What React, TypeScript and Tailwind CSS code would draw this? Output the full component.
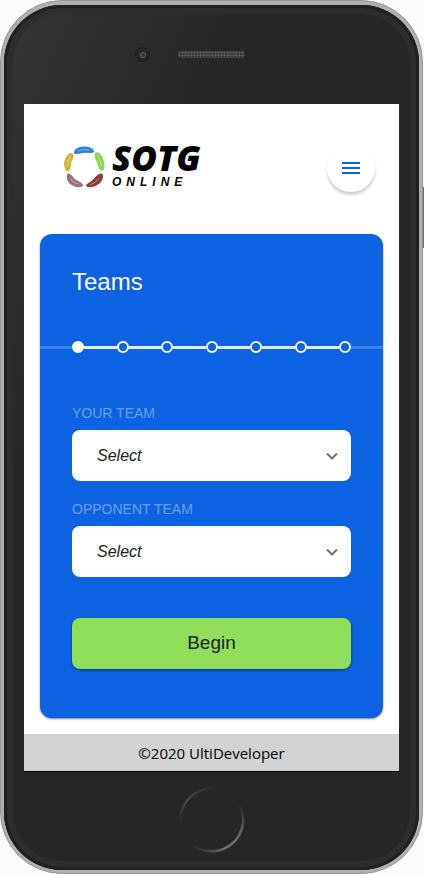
import { useState } from "react";

const STEPS = ["Teams", "Rules", "Fouls", "Fairness", "Attitude", "Communication", "Summary"];

function RingLogo() {
  return (
    <svg viewBox="0 0 42 42" className="size-[42px] shrink-0" aria-hidden="true">
      <g strokeWidth="1.200" strokeLinejoin="round">
        <path d="M11.500 7C11.500 4 15 1.800 20 1.200C25 .8 30 2.500 30.500 5.500C29.500 7 26 6.500 23 6.200C18 6 14 8.500 11.500 7Z" fill="#2f7fe0" stroke="#2f7fe0" />
        <path d="M33 7C36 6 39 10 40.200 15C41.500 20 41 24 39 24C36 24 36 20 34.800 17C33.500 14 30.500 9.500 33 7Z" fill="#8bd850" stroke="#8bd850" />
        <path d="M38.500 28C41 31 38 36 34 38.500C30 41 25 41 23.500 39.500C24.500 37.500 28 36.500 30 34.500C32.500 32 34.500 28 38.500 28Z" fill="#854234" stroke="#854234" />
        <path d="M5 28C8.500 28 8.500 31 11.500 33.500C14.500 36 19 36.500 19.500 39.500C18 41.500 12.500 41 9 38.500C5 36 3 31 5 28Z" fill="#957084" stroke="#957084" />
        <path d="M8.500 7.500C11.500 8.500 9.500 12 8.200 15C6.800 18.500 8 23.500 5 24.500C2 24 1 18.500 2.200 14.500C3.200 11 6 7.200 8.500 7.500Z" fill="#cdb63b" stroke="#cdb63b" />
      </g>
      <g fill="none" stroke="#ffffff" strokeOpacity="0.400" strokeWidth="1" strokeLinecap="round">
        <path d="M15 4.800Q20 2.500 26 4" />
        <path d="M35 11Q38 15 38.200 20" />
        <path d="M27 39Q33 37 36 32.500" />
        <path d="M7 32.500Q10 37 15 38" />
        <path d="M7 11Q4.500 15 4.500 20" />
      </g>
    </svg>
  );
}

function Stepper({ current }: { current: number }) {
  return (
    <div className="flex h-3 items-center" role="group" aria-label="Progress">
      <span className="h-[3px] w-8 bg-white/20" />
      <ol className="flex flex-1 items-center">
        {STEPS.map((step, i) => (
          <li key={step} aria-label={step} className={i ? "flex flex-1 items-center" : "flex items-center"}>
            {i > 0 && <span className="h-[3px] flex-1 bg-[#e8eaf2]" />}
            <span
              className={
                i === current
                  ? "size-3 rounded-full border-2 border-white bg-white"
                  : "size-3 rounded-full border-2 border-white"
              }
            />
          </li>
        ))}
      </ol>
      <span className="h-[3px] w-8 bg-white/20" />
    </div>
  );
}

function TeamSelect({ id, label }: { id: string; label: string }) {
  return (
    <div className="flex flex-col gap-[7px]">
      <label htmlFor={id} className="text-sm leading-5 text-[#6d9fee] uppercase">
        {label}
      </label>
      <div className="grid items-center">
        <select
          id={id}
          className="col-start-1 row-start-1 h-[51px] w-full appearance-none rounded-lg bg-white pr-10 pl-[25px] text-base text-[#222222] italic"
        >
          <option>Select</option>
        </select>
        <svg
          viewBox="0 0 12 8"
          className="pointer-events-none col-start-1 row-start-1 mr-[13px] h-2 w-3 justify-self-end"
          fill="none"
          stroke="#757075"
          strokeWidth="2"
          aria-hidden="true"
        >
          <path d="M1 1.500L6 6.500L11 1.500" />
        </svg>
      </div>
    </div>
  );
}

function TopBezel() {
  return (
    <div className="grid h-[99px] grid-cols-[1fr_67px_1fr] items-center">
      <span className="mr-7 grid size-[15px] place-items-center justify-self-end rounded-full border-2 border-[#212121] bg-[#272727]">
        <span className="size-[6px] rounded-full border border-[#626268] bg-[#34343c]" />
      </span>
      <span className="h-[7px] rounded-full bg-[#3b383b] bg-[radial-gradient(#686568_30%,transparent_60%)] bg-size-[3px_3px]" />
    </div>
  );
}

function HomeButton() {
  return (
    <div className="flex flex-1 justify-center pt-[15px]">
      <button aria-label="Home" className="size-[66px] rounded-full">
        <svg viewBox="0 0 66 66" fill="none" strokeWidth="2.500">
          <defs>
            <linearGradient id="homeUpper" x1="0" y1="1" x2="1" y2="0">
              <stop offset="0" stopColor="#262626" />
              <stop offset="0.4" stopColor="#4c494a" />
              <stop offset="1" stopColor="#262626" />
            </linearGradient>
            <linearGradient id="homeLower" x1="0" y1="1" x2="1" y2="0">
              <stop offset="0" stopColor="#262626" />
              <stop offset="0.350" stopColor="#777475" />
              <stop offset="0.700" stopColor="#686566" />
              <stop offset="1" stopColor="#262626" />
            </linearGradient>
          </defs>
          <path d="M1.500 36A31.500 31.500 0 0 1 40 2.500" stroke="url(#homeUpper)" />
          <path d="M16 59.500A31.500 31.500 0 0 0 61 19" stroke="url(#homeLower)" />
        </svg>
      </button>
    </div>
  );
}

export default function App() {
  const [current, setCurrent] = useState(0);

  return (
    <div className="relative h-screen overflow-hidden bg-[#fbfbfb] font-['Liberation_Sans',Arial,sans-serif]">
      <span className="absolute top-[187px] right-0 h-[61px] w-1 bg-[#736b6e]" />
      <div className="relative mr-px flex min-h-full flex-col rounded-[62px] border border-[#969696] bg-[#b0b0b0] p-[3px] pt-1">
        <div className="flex flex-1 flex-col rounded-[58px] bg-[linear-gradient(115deg,#353535_0%,#262626_30%)] px-5 shadow-[inset_0_0_0_3px_#202020,inset_0_0_0_9px_#2d2d2d]">
          <TopBezel />
          <div className="flex flex-col border-b border-black bg-white">
            <header className="flex items-start justify-between px-6 pt-10 pb-[42px] pl-[39px]">
              <a href="#" className="flex items-center gap-[7px] text-black italic">
                <RingLogo />
                <span className="flex flex-col gap-0.5">
                  <span className="font-['Open_Sans',sans-serif] text-[35px] leading-7 font-extrabold">SOTG</span>
                  <span className="text-xs leading-4 font-bold tracking-[5px]">ONLINE</span>
                </span>
              </a>
              <button
                aria-label="Menu"
                className="grid size-12 place-items-center rounded-full bg-white shadow-[0_3px_3px_#00000033]"
              >
                <svg viewBox="0 0 24 24" className="size-6" fill="#0d62e2" aria-hidden="true">
                  <path d="M3 18h18v-2H3v2zm0-5h18v-2H3v2zm0-7v2h18V6H3z" />
                </svg>
              </button>
            </header>
            <main className="mx-4 mb-4 rounded-xl bg-[#0d62e2] shadow-[0_1px_2px_#00000080]">
              <h1 className="px-8 pt-8 text-2xl leading-8 text-white">Teams</h1>
              <div className="pt-[43px]">
                <Stepper current={current} />
              </div>
              <form
                className="flex flex-col px-8 pt-[50px] pb-[49px]"
                onSubmit={(e) => {
                  e.preventDefault();
                  setCurrent(1);
                }}
              >
                <div className="flex flex-col gap-[18px]">
                  <TeamSelect id="your-team" label="Your team" />
                  <TeamSelect id="opponent-team" label="Opponent team" />
                </div>
                <button
                  type="submit"
                  className="mt-[41px] h-[51px] rounded-lg bg-[#8fdf5a] text-[19px] text-[#222222] shadow-[0_1px_3px_#00000080]"
                >
                  Begin
                </button>
              </form>
            </main>
            <footer className="bg-[#d2d4d3] pt-[9px] pb-2 text-center font-['Open_Sans',sans-serif] text-[15px] leading-5 text-black">
              ©2020 UltiDeveloper
            </footer>
          </div>
          <HomeButton />
        </div>
      </div>
    </div>
  );
}
